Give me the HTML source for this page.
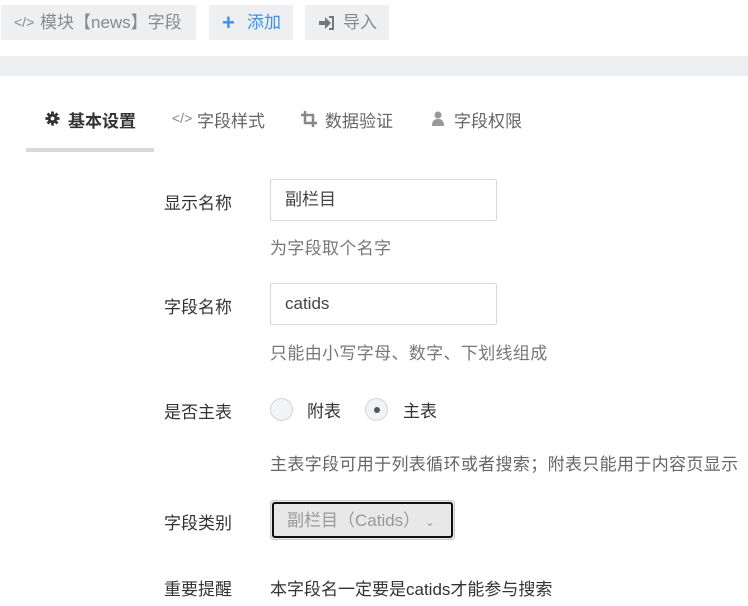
<!DOCTYPE html>
<html><head><meta charset="utf-8"><style>
*{margin:0;padding:0;box-sizing:border-box}
body{width:748px;height:606px;background:#fff;font-family:"Liberation Sans","Noto Sans CJK SC",sans-serif;font-size:17px;color:#333;position:relative;overflow:hidden}
.abs{position:absolute;white-space:nowrap}
.btn{position:absolute;top:5px;height:35px;background:#eeeff1;line-height:35px;color:#8a8a8a;font-size:17px}
.band{position:absolute;left:0;top:56px;width:748px;height:20px;background:#edeef0}
.t{position:absolute;top:107px;font-size:17px;color:#666;white-space:nowrap}
.lbl{position:absolute;left:164px;font-size:17px;color:#333}
.inp{position:absolute;left:270px;width:227px;height:42px;border:1px solid #d9d9d9;border-radius:2px;padding-left:14px;line-height:40px;font-size:17px;color:#444}
.help{position:absolute;left:270px;font-size:17px;color:#777;white-space:nowrap;letter-spacing:0.35px}
.radio{position:absolute;top:398px;width:23px;height:23px;border:1px solid #d5d5d5;border-radius:50%;background:#f2f3f5}
svg{position:absolute}
</style></head><body>
<div class="btn" style="left:1px;width:195px"><span class="abs" style="left:13px;font-size:14px">&lt;/&gt;</span><span class="abs" style="left:39px">模块【news】字段</span></div>
<div class="btn" style="left:209px;width:84px;color:#3d8ff0"><b class="abs" style="left:13px;font-size:22px">+</b><span class="abs" style="left:38px">添加</span></div>
<div class="btn" style="left:305px;width:84px"><svg style="left:14px;top:11px" width="16" height="14" viewBox="0 0 16 14"><path d="M0 5h6V1l6 6-6 6V9H0z" fill="#777"/><path d="M10 1h4v12h-4" stroke="#777" stroke-width="2" fill="none"/></svg><span class="abs" style="left:38px">导入</span></div>
<div class="band"></div>
<svg style="left:45px;top:111px" width="15" height="15" viewBox="0 0 16 16"><circle cx="8" cy="8" r="5" fill="#333"/><g stroke="#333" stroke-width="3"><line x1="8" y1="0.5" x2="8" y2="15.5"/><line x1="0.5" y1="8" x2="15.5" y2="8"/><line x1="2.7" y1="2.7" x2="13.3" y2="13.3"/><line x1="13.3" y1="2.7" x2="2.7" y2="13.3"/></g><circle cx="8" cy="8" r="2" fill="#fff"/></svg>
<div class="t" style="left:68px;color:#333;font-weight:bold">基本设置</div>
<div class="t" style="left:172px;font-size:14px;top:110px;color:#888">&lt;/&gt;</div>
<div class="t" style="left:197px">字段样式</div>
<svg style="left:301px;top:111px" width="16" height="16" viewBox="0 0 16 16"><path d="M4 0v12h12M0 4h12v12" stroke="#888" stroke-width="2.5" fill="none"/></svg>
<div class="t" style="left:325px">数据验证</div>
<svg style="left:432px;top:111px" width="12" height="15" viewBox="0 0 12 15"><circle cx="6" cy="4" r="3.5" fill="#999"/><path d="M0 15c0-5 2-7 6-7s6 2 6 7z" fill="#999"/></svg>
<div class="t" style="left:454px">字段权限</div>
<div class="abs" style="left:26px;top:148px;width:128px;height:4px;background:#d9d9dd"></div>
<div class="lbl" style="top:189px">显示名称</div>
<div class="inp" style="top:179px">副栏目</div>
<div class="help" style="top:234px">为字段取个名字</div>
<div class="lbl" style="top:293px">字段名称</div>
<div class="inp" style="top:283px">catids</div>
<div class="help" style="top:339px">只能由小写字母、数字、下划线组成</div>
<div class="lbl" style="top:398px">是否主表</div>
<div class="radio" style="left:270px"></div>
<div class="abs" style="left:307px;top:397px">附表</div>
<div class="radio" style="left:365px"><div style="position:absolute;left:8px;top:8px;width:6px;height:6px;border-radius:50%;background:#555"></div></div>
<div class="abs" style="left:403px;top:397px">主表</div>
<div class="help" style="top:450px;color:#666">主表字段可用于列表循环或者搜索；附表只能用于内容页显示</div>
<div class="lbl" style="top:509px">字段类别</div>
<div class="abs" style="left:270px;top:500px;width:185px;height:40px;border:1px solid #ccc;border-radius:3px;background:#e8e8e8;padding:1px">
<div style="width:100%;height:100%;border:2px solid #111;border-radius:3px;line-height:33px;padding-left:13px;color:#999;font-size:17px;white-space:nowrap">副栏目（Catids） <span style="font-size:12px">⌄</span></div></div>
<div class="lbl" style="top:575px">重要提醒</div>
<div class="abs" style="left:270px;top:575px">本字段名一定要是catids才能参与搜索</div>
</body></html>
